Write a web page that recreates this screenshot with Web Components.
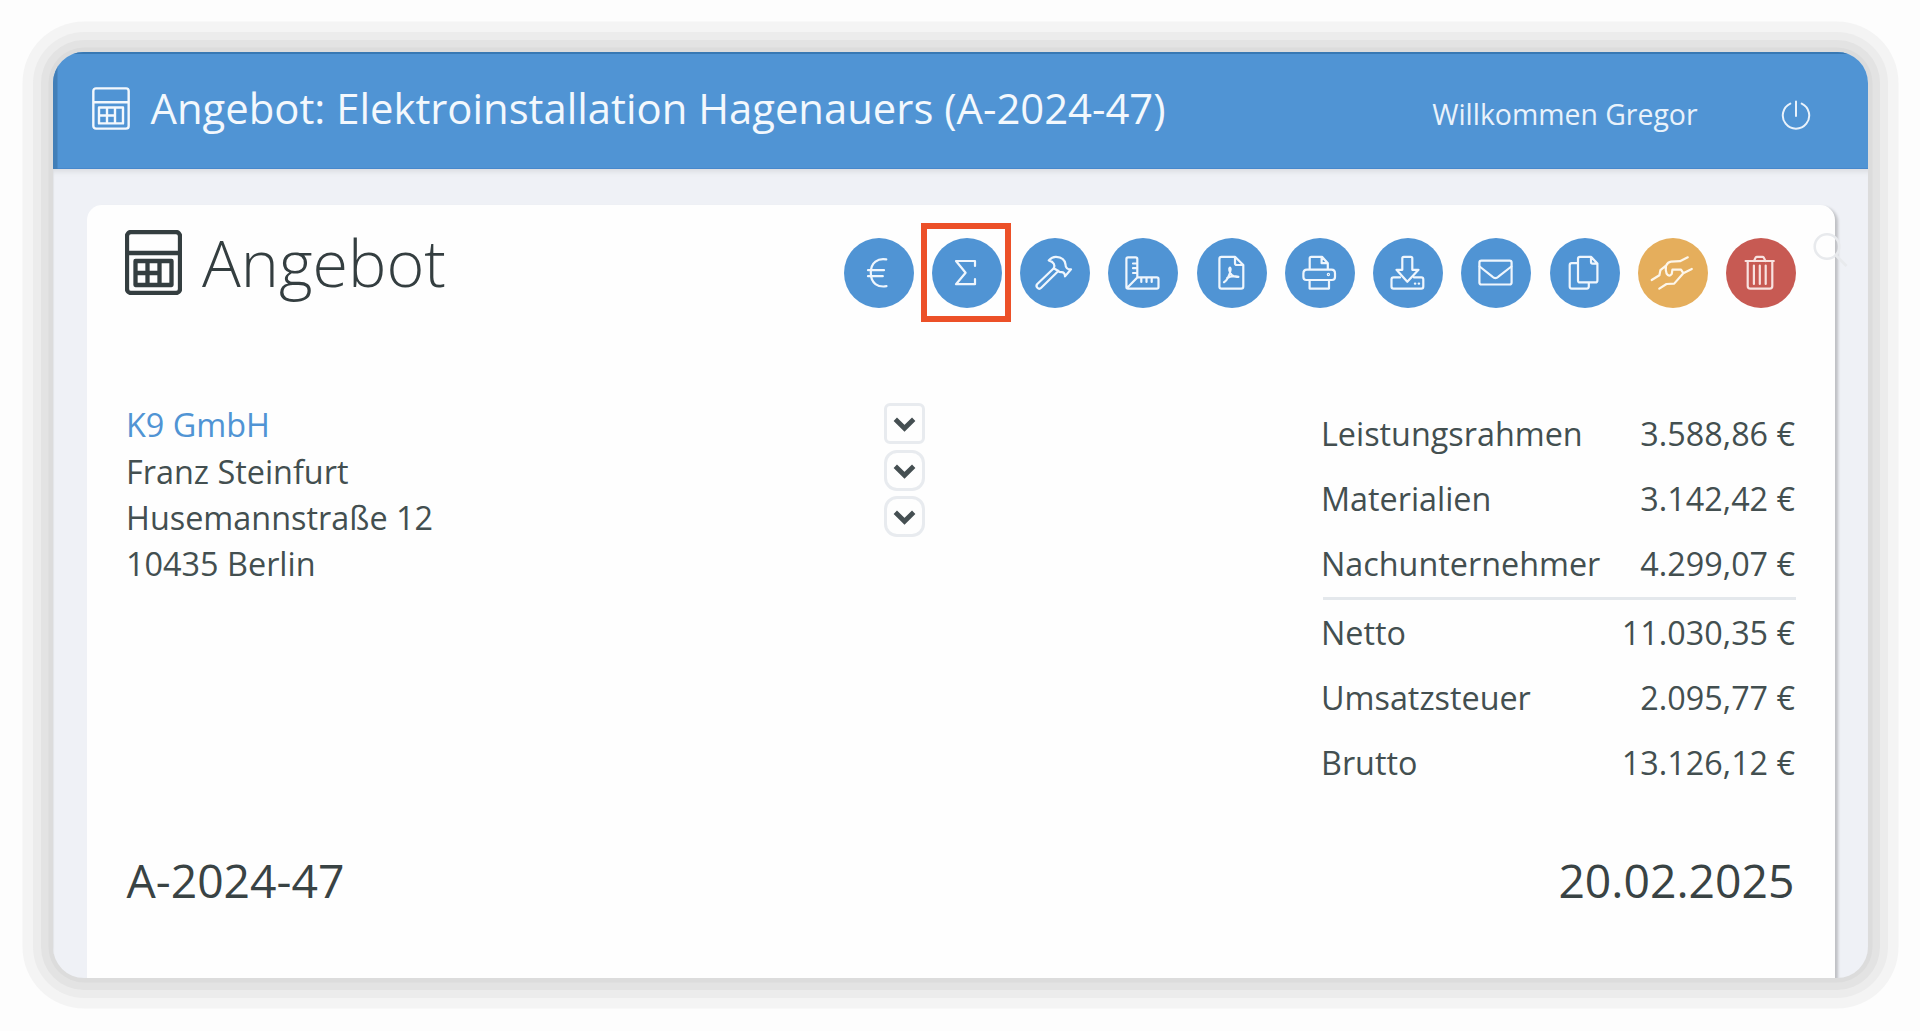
<!DOCTYPE html>
<html lang="de">
<head>
<meta charset="utf-8">
<title>Angebot: Elektroinstallation Hagenauers (A-2024-47)</title>
<style>
  html, body { margin: 0; height: 100%; }
  body {
    background: #fdfdfd;
    font-family: "Open Sans", "Noto Sans", sans-serif;
    color: #434f50;
    overflow: hidden;
    box-sizing: border-box;
    padding: 52px 52px 53px 52.5px;
  }
</style>
</head>
<body>
<app-window>
  <app-header slot="header" heading="Angebot: Elektroinstallation Hagenauers (A-2024-47)" user="Willkommen Gregor"></app-header>
  <offer-card>
    <card-title slot="title">Angebot</card-title>
    <round-action slot="actions" icon="euro"></round-action>
    <round-action slot="actions" icon="sum" marked></round-action>
    <round-action slot="actions" icon="hammer"></round-action>
    <round-action slot="actions" icon="ruler"></round-action>
    <round-action slot="actions" icon="pdf"></round-action>
    <round-action slot="actions" icon="print"></round-action>
    <round-action slot="actions" icon="download"></round-action>
    <round-action slot="actions" icon="mail"></round-action>
    <round-action slot="actions" icon="copy"></round-action>
    <round-action slot="actions" icon="hands" tone="warn"></round-action>
    <round-action slot="actions" icon="trash" tone="danger"></round-action>
    <address-line slot="address" link picker="square">K9 GmbH</address-line>
    <address-line slot="address" picker="round">Franz Steinfurt</address-line>
    <address-line slot="address" picker="round">Husemannstraße 12</address-line>
    <address-line slot="address">10435 Berlin</address-line>
    <total-row slot="totals" amount="3.588,86 €">Leistungsrahmen</total-row>
    <total-row slot="totals" amount="3.142,42 €">Materialien</total-row>
    <total-row slot="totals" amount="4.299,07 €">Nachunternehmer</total-row>
    <total-row slot="totals" amount="11.030,35 €" ruled>Netto</total-row>
    <total-row slot="totals" amount="2.095,77 €">Umsatzsteuer</total-row>
    <total-row slot="totals" amount="13.126,12 €">Brutto</total-row>
    <span slot="number">A-2024-47</span>
    <span slot="date">20.02.2025</span>
  </offer-card>
</app-window>

<script>
const define = (name, render) => customElements.define(name, class extends HTMLElement {
  constructor() {
    super();
    this.attachShadow({ mode: 'open' });
  }
  connectedCallback() {
    this.shadowRoot.innerHTML = render(this);
  }
});

define('calc-icon', () => `
  <style>
    :host { display: block; width: 57px; height: 65px; }
    svg { display: block; width: 100%; height: 100%; fill: none; stroke: currentColor; stroke-width: var(--calc-stroke, 4.3); stroke-linejoin: round; }
  </style>
  <svg viewBox="0 0 57 65" preserveAspectRatio="none">
    <rect x="2" y="2" width="53" height="61" rx="4"/>
    <path d="M2 23H55"/>
    <path d="M10.5 31H46.5V55H10.5ZM22.5 31V55M34.5 31V55M10.5 43H34.5"/>
  </svg>`);

define('app-window', () => `
  <style>
    :host {
      display: flex; flex-direction: column; height: 100%; position: relative;
      background: #eff1f6; border-radius: 31px;
      box-shadow: 0 0 0 4.5px #dcdcdc, 0 0 0 12px #e3e3e3, 0 0 0 20px #ececec, 0 0 0 30.5px #f4f4f4;
    }
    .clip { flex: 1; display: flex; flex-direction: column; overflow: hidden; border-radius: 31px; min-height: 0; }
    main { flex: 1; display: flex; min-height: 0; padding: 36px 33px 0 34px; box-shadow: inset 0 7px 5px -4px #dcdee2, inset 1px 0 1px #e4e6ea; }
    ::slotted(offer-card) { flex: 1; }
    .search { position: absolute; left: 1759px; top: 179px; width: 42px; height: 42px; fill: none; stroke: #e8eaed; stroke-width: 2.6; }
  </style>
  <div class="clip">
    <slot name="header"></slot>
    <main><slot></slot></main>
  </div>
  <svg class="search" viewBox="0 0 42 42"><circle cx="15" cy="15.5" r="12.3"/><path d="M24 24.5L34.5 35"/></svg>`);

define('app-header', el => `
  <style>
    :host {
      display: flex; justify-content: space-between; height: 117px; flex: none; box-sizing: border-box;
      padding: 0 57.5px 0 39px; background: #5094d4; color: #f3f8fd;
      box-shadow: inset 4.5px 0 0 #427fb8, inset 0 2px 0 #3878b3, inset 0 -1px 0 #4788cc;
    }
    .group { display: flex; align-items: center; }
    .title { gap: 21px; padding-bottom: 5px; font-size: 41.8px; }
    .title calc-icon { width: 38px; height: 43px; --calc-stroke: 3.6; }
    .user { gap: 83px; padding-top: 8px; font-size: 28.4px; }
    .title span, .user span { white-space: nowrap; line-height: 1.3; }
    .title span { padding-top: 1px; }
    .user span { color: #e9f2fb; }
    svg { width: 30px; height: 30px; fill: none; stroke: #e9f2fb; stroke-width: 2; stroke-linecap: round; }
  </style>
  <div class="group title"><calc-icon></calc-icon><span>${el.getAttribute('heading')}</span></div>
  <div class="group user"><span>${el.getAttribute('user')}</span>
    <svg viewBox="0 0 30 30"><path d="M15 1.5V16M9.3 3.6A13.2 13.2 0 1 0 20.7 3.6"/></svg>
  </div>`);

define('offer-card', () => `
  <style>
    :host {
      display: flex; flex-direction: column; box-sizing: border-box; background: #fefefe;
      border-radius: 15px 15px 0 0; padding: 24.5px 39px 0 38.5px; color: #434f50;
      box-shadow: 3px 2px 3px rgba(0,0,0,.2);
    }
    .top { display: flex; justify-content: space-between; height: 171px; }
    .actions { display: flex; gap: 18.26px; padding: 8.5px 0 0; }
    .middle { display: flex; justify-content: space-between; height: 432px; }
    .address { width: 800px; }
    .totals { width: 473.5px; }
    .bottom { display: flex; justify-content: space-between; font-size: 46.3px; line-height: 96px; color: #394344; padding: 0 1.5px 0 1.5px; }
  </style>
  <div class="top"><slot name="title"></slot><div class="actions"><slot name="actions"></slot></div></div>
  <div class="middle">
    <div class="address"><slot name="address"></slot></div>
    <div class="totals"><slot name="totals"></slot></div>
  </div>
  <div class="bottom"><slot name="number"></slot><slot name="date"></slot></div>`);

define('card-title', () => `
  <style>
    :host { display: flex; gap: 20px; align-items: flex-start; color: #343e40; font-size: 64.6px; font-weight: 300; line-height: 65px; }
  </style>
  <calc-icon></calc-icon><span><slot></slot></span>`);

const ICONS = {
  euro: '<path d="M42.3 21.4C34 20 26.8 24 26.8 34.8S34 49.6 42.5 48.2M24 32.2H40M24 38.2H38.8"/>',
  sum: '<path d="M43 28V23H24L33.6 34.7L24 46.2H43V41"/>',
  hammer: '<path d="M33.8 30.3L17.3 46C15 48.6 18.6 52.3 21.2 49.8L38.3 33Z"/><path d="M33.8 30.3C35.3 27.2 34 24 28.7 22.4C31 20 33 18.8 36 18.9C42 19.2 45 22.5 45.5 26.5C45.5 29.5 47.5 31.8 51 31.3L45 38.4C45.2 35.5 43.2 34 41.4 34.2C39.8 34.3 39 33.8 38.3 33"/>',
  ruler: '<path d="M20 19.3H27.6Q29.3 19.3 29.3 21V39.4H48.8Q50.5 39.4 50.5 41V49Q50.5 50.7 48.8 50.7H20Q18.4 50.7 18.4 49V21Q18.4 19.3 20 19.3ZM19 50L29.3 39.4M29.3 25.5H25M29.3 30.2H25M29.3 35H25M33.3 39.4V44M38.5 39.4V44M43.7 39.4V44"/>',
  pdf: '<path d="M38 18.8H24.4Q22.4 18.8 22.4 21V48.5Q22.4 50.6 24.4 50.6H44.2Q46.3 50.6 46.3 48.5V27ZM38 18.8V25.3Q38 27 39.8 27H46.3"/><path d="M27 44.2C30 42.5 33.3 36 33.6 31.5C33.5 28.7 31.9 29.6 32.3 32C33 36.3 36 39.5 41.4 38.8M30.3 40C33 38 37 37.8 41.4 38.8"/>',
  print: '<path d="M24.7 31.6V20.3Q24.7 18.8 26.3 18.8H37L42.8 25.2V31.6M36.6 19V25.2H42.8M24.6 42H21.3Q18.4 42 18.4 39V35.5Q18.4 31.6 22 31.6H46.5Q50 31.6 50 35.5V39Q50 42 47 42H44M24.6 42H44V50.6H24.6Z"/><circle cx="43.4" cy="36.5" r=".6"/>',
  download: '<path d="M30.8 18.8H37.8Q39.3 18.8 39.3 20.3V31.8H45.5L34.3 43.8L23.5 31.8H29.3V20.3Q29.3 18.8 30.8 18.8ZM27 39.4H20.6Q18.5 39.4 18.5 41.5V48.5Q18.5 50.6 20.6 50.6H48.3Q50.3 50.6 50.3 48.5V41.5Q50.3 39.4 48.3 39.4H41"/><path d="M42 45.6h.2M45.8 45.6h.2" stroke-width="2.4"/>',
  mail: '<rect x="18.4" y="22.7" width="32.2" height="23.8" rx="2"/><path d="M18.6 28.5L31.4 38.7Q34.4 41.4 37.4 38.7L50.4 28.5"/>',
  copy: '<path d="M41 18.8H30Q28 18.8 28 20.8V42.4Q28 44.4 30 44.4H45.4Q47.4 44.4 47.4 42.4V25.6ZM41 18.8V24Q41 25.6 42.6 25.6H47.4M28 25.2H21.7Q19.7 25.2 19.7 27.2V48.6Q19.7 50.6 21.7 50.6H36.8Q38.8 50.6 38.8 48.6V44.4"/>',
  hands: '<path d="M13.7 42L21.4 37.2L22.4 32.2L28 27.7Q30 23.8 33 23.6L42 23.2L49.8 19.3M28 27.7Q27.3 32 28.6 35.6Q31 39.5 33.8 35.8L34.4 31.6H43L45.3 35.2L53.8 31M45.3 35.2L36.2 45.6L28.5 46L21.3 50.6"/>',
  trash: '<path d="M19.6 23H47.8M28 23L29.6 19.6Q30.1 18.8 31 18.8H36.4Q37.3 18.8 37.8 19.6L39.4 23M21.7 23V48Q21.7 50.7 24.4 50.7H43.7Q46.3 50.7 46.3 48V23M27.9 27.5V46M33.8 27.5V46M39.7 27.5V46"/>'
};

define('round-action', el => `
  <style>
    :host { display: block; position: relative; width: 70px; height: 70px; border-radius: 50%; background: #5094d4; color: #eff6fd; }
    :host([tone="warn"]) { background: #e5ae5c; color: #fdf6ea; }
    :host([tone="danger"]) { background: #c75a53; color: #f8e2e0; }
    :host([marked])::after { content: ""; position: absolute; left: -10.5px; top: -15.5px; width: 78px; height: 87.5px; border: 6px solid #ec5028; }
    svg { display: block; fill: none; stroke: currentColor; stroke-width: 2.2; stroke-linecap: round; stroke-linejoin: round; }
  </style>
  <svg width="70" height="70" viewBox="0 0 70 70">${ICONS[el.getAttribute('icon')]}</svg>`);

define('picker-button', () => `
  <style>
    :host { display: block; box-sizing: border-box; width: 41px; height: 41px; border: 3px solid #e8ebef; border-radius: 13px; background: #fefefe; }
    :host([shape="square"]) { border-radius: 6px; }
    svg { display: block; width: 100%; height: 100%; fill: none; stroke: #454f52; stroke-width: 4.8; }
  </style>
  <svg viewBox="0 0 35 35"><path d="M8.3 13.3L17.5 22.3L26.7 13.3"/></svg>`);

define('address-line', el => `
  <style>
    :host { display: flex; justify-content: space-between; align-items: center; height: 46.4px; font-size: 32.4px; }
    :host([link]) .text { color: #5094d4; }
    .text { margin-left: 1px; padding-top: 1px; }
  </style>
  <span class="text"><slot></slot></span>
  ${el.hasAttribute('picker') ? `<picker-button shape="${el.getAttribute('picker')}"></picker-button>` : ''}`);

define('total-row', el => `
  <style>
    :host { display: flex; justify-content: space-between; align-items: center; height: 65.2px; font-size: 32.35px; }
    :host([ruled]) { border-top: 3px solid #e4e8ec; margin-top: 1px; height: 64.2px; }
    .label { margin-left: -1.5px; }
    .amount { margin-right: 1px; }
  </style>
  <span class="label"><slot></slot></span>
  <span class="amount">${el.getAttribute('amount')}</span>`);
</script>
</body>
</html>
